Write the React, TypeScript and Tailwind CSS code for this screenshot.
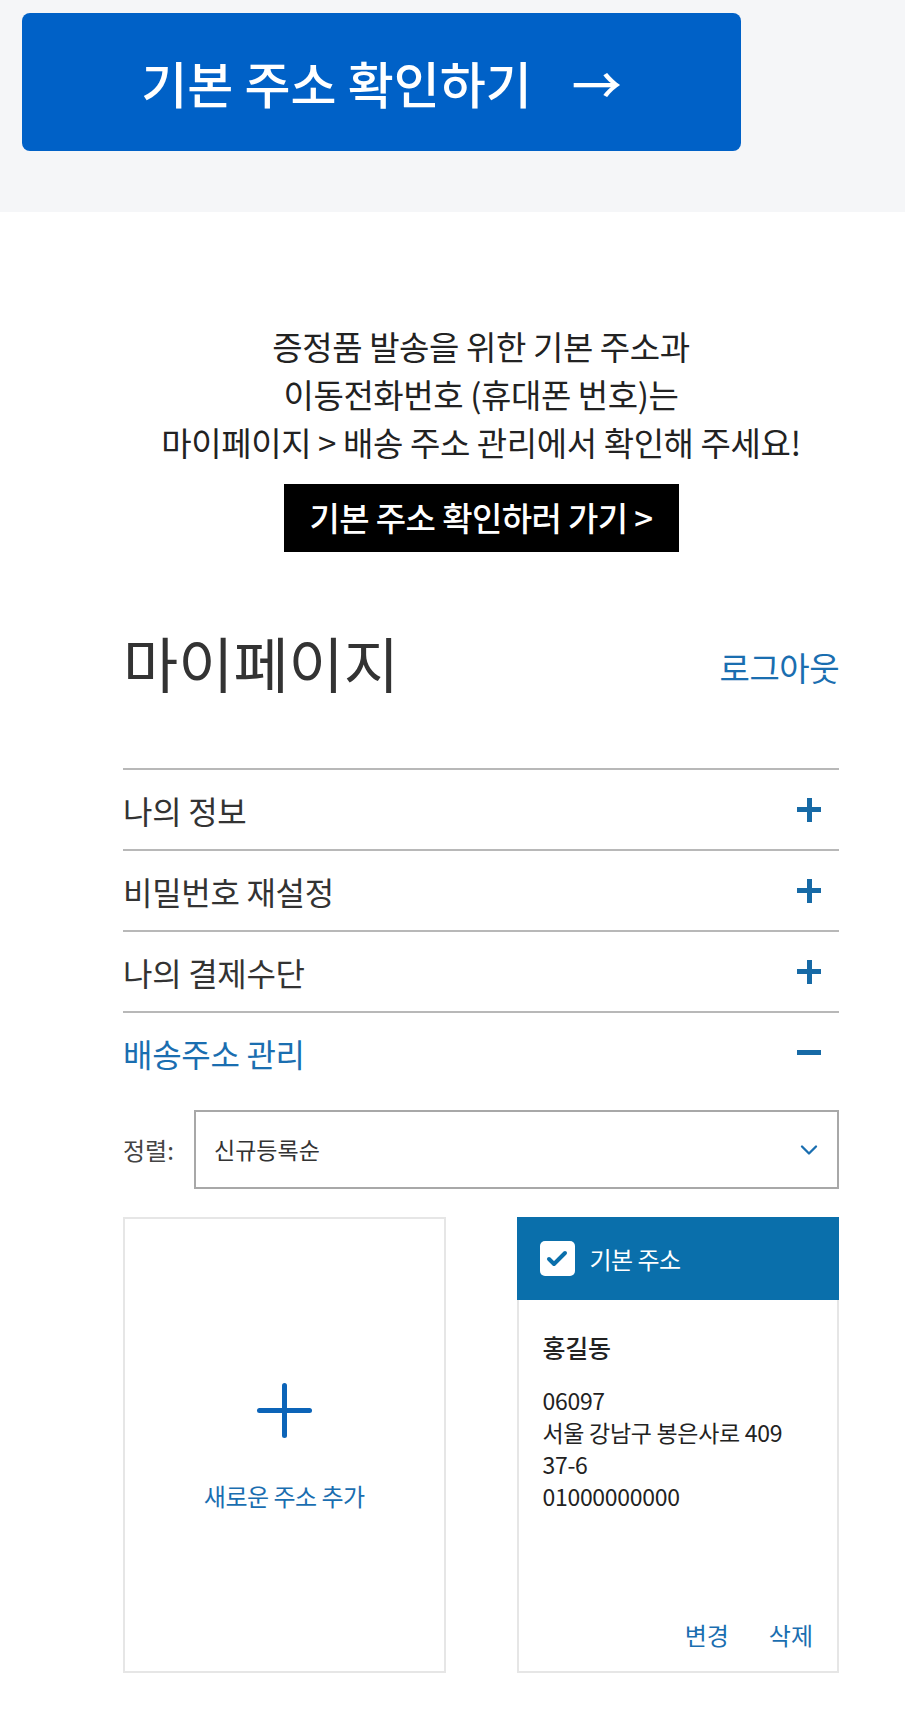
import { Check, ChevronDown } from 'lucide-react'

const FONT = { fontFamily: '"Noto Sans CJK KR", "Noto Sans", sans-serif' }

const SECTIONS = [
  { label: '나의 정보', open: false },
  { label: '비밀번호 재설정', open: false },
  { label: '나의 결제수단', open: false },
  { label: '배송주소 관리', open: true },
]

export default function App() {
  return (
    <div className="w-[905px] min-h-[1719px] bg-white text-[#333]" style={FONT}>
      <div className="h-[212px] bg-[#f5f6f8] pt-[13px] pl-[22px]">
        <button className="w-[719px] h-[138px] rounded-lg bg-[#0061c7] text-white text-[50px] font-medium flex items-center justify-center gap-[40px]">
          <span>기본 주소 확인하기</span>
          <span>→</span>
        </button>
      </div>

      <div className="ml-[123px] w-[716px] pb-[46px]">
        <div className="pt-[110px] flex flex-col items-center">
          <p className="text-center text-[33px] leading-[48px] tracking-[-0.4px] text-[#222]">
            증정품 발송을 위한 기본 주소과<br />
            이동전화번호 (휴대폰 번호)는<br />
            마이페이지 &gt; 배송 주소 관리에서 확인해 주세요!
          </p>
          <button className="mt-[18px] w-[395px] h-[68px] bg-black text-white text-[33px] font-medium tracking-[-0.6px]">
            기본 주소 확인하러 가기 &gt;
          </button>
        </div>

        <div className="mt-[70px] flex items-center justify-between h-[80px]">
          <h1 className="text-[60px] font-normal leading-none text-[#333]">마이페이지</h1>
          <a className="mt-[12px] text-[33px] text-[#1a6eb0] tracking-[-0.5px]">로그아웃</a>
        </div>

        <div className="mt-[66px]">
          {SECTIONS.map(s => (
            <div key={s.label} className={`h-[81px] flex items-center justify-between border-t-2 border-[#b8b8b8] ${s.open ? 'text-[#1a6eb0]' : 'text-[#333]'}`}>
              <span className="text-[32px] tracking-[-0.3px]">{s.label}</span>
              <span className="mr-[18px] w-[24px] h-[24px] relative">
                <span className="absolute left-0 right-0 top-[9.5px] h-[5px] bg-[#176aa6]" />
                {!s.open && <span className="absolute top-0 bottom-0 left-[9.5px] w-[5px] bg-[#176aa6]" />}
              </span>
            </div>
          ))}
        </div>

        <div className="mt-[18px] flex items-center">
          <span className="w-[71px] text-[24px] text-[#444]">정렬:</span>
          <div className="flex-1 h-[79px] border-2 border-[#a8a8a8] flex items-center justify-between pl-[18px] pr-[14px]">
            <span className="text-[23px] text-[#333]">신규등록순</span>
            <ChevronDown className="w-[28px] h-[28px] text-[#1a6eb0]" strokeWidth={2} />
          </div>
        </div>

        <div className="mt-[28px] grid grid-cols-2 gap-[71px]">
          <div className="h-[456px] border-2 border-[#e6e6e6] flex flex-col items-center pt-[164px]">
            <span className="w-[55px] h-[55px] relative">
              <span className="absolute left-0 right-0 top-[25px] h-[5px] rounded-sm bg-[#0c64b8]" />
              <span className="absolute top-0 bottom-0 left-[25px] w-[5px] rounded-sm bg-[#0c64b8]" />
            </span>
            <span className="mt-[40px] text-[24px] text-[#1a6eb0] tracking-[-0.5px]">새로운 주소 추가</span>
          </div>

          <div className="h-[456px] border-2 border-[#e6e6e6] flex flex-col">
            <div className="h-[83px] -mx-[2px] -mt-[2px] bg-[#0a6fab] flex items-center pl-[23px] gap-[15px]">
              <span className="w-[35px] h-[35px] rounded-[5px] bg-white flex items-center justify-center">
                <Check className="w-[24px] h-[24px] text-[#0a6fab]" strokeWidth={4} />
              </span>
              <span className="text-[24px] text-white tracking-[-0.5px]">기본 주소</span>
            </div>
            <div className="pl-[24px] pt-[30px] text-[23px] tracking-[-0.3px] text-[#222]">
              <p className="text-[25px] font-medium leading-[34px]">홍길동</p>
              <div className="mt-[20px] leading-[32px]">
                <p>06097</p>
                <p>서울 강남구 봉은사로 409</p>
                <p>37-6</p>
                <p>01000000000</p>
              </div>
            </div>
            <div className="mt-auto mb-[18px] flex justify-end gap-[40px] pr-[24px] text-[24px] text-[#1a6eb0]">
              <a>변경</a>
              <a>삭제</a>
            </div>
          </div>
        </div>
      </div>
    </div>
  )
}
